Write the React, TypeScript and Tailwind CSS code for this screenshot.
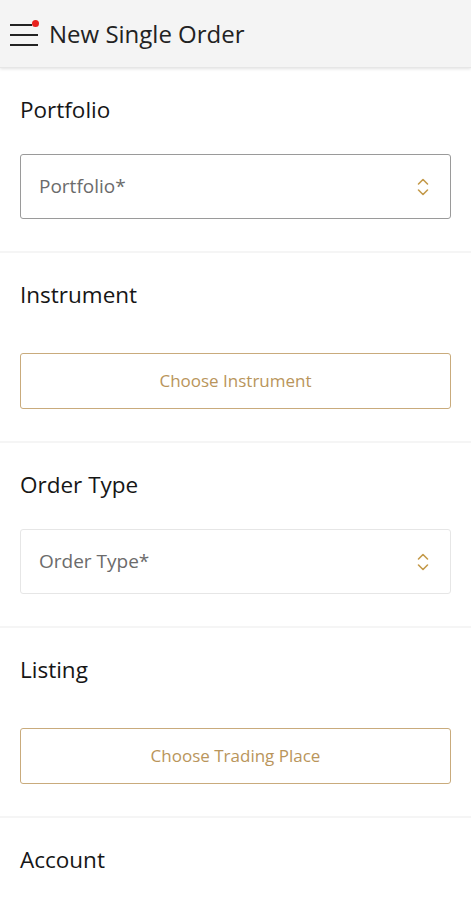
import { ReactNode } from "react";

function Chevrons() {
  return (
    <svg className="w-4 h-[22px] shrink-0" viewBox="0 0 16 22" fill="none" stroke="#c49a4a" strokeWidth={1.6} strokeLinecap="round" strokeLinejoin="round">
      <path d="M3.5 8 8 3.5 12.5 8" />
      <path d="M3.5 14 8 18.5 12.5 14" />
    </svg>
  );
}

function Select({ label, active }: { label: string; active?: boolean }) {
  return (
    <div
      className={`mt-[30px] h-[65px] flex items-center justify-between pl-[18px] pr-[19px] bg-white rounded-[3px] border ${
        active ? "border-[#9a9a9a]" : "border-[#e6e6e6]"
      }`}
    >
      <span className="text-[19px] text-[#6b6b6b]">{label}</span>
      <Chevrons />
    </div>
  );
}

function ChooseButton({ label }: { label: string }) {
  return (
    <button className="mt-[44px] w-full h-[56px] flex items-center justify-center bg-white rounded-[3px] border border-[#c9ab7c] text-[17px] text-[#b9955b]">
      {label}
    </button>
  );
}

function Section({ title, children, last }: { title: string; children?: ReactNode; last?: boolean }) {
  return (
    <section className={`px-5 pt-7 pb-8 ${last ? "" : "border-b-2 border-[#f5f5f5]"}`}>
      <h2 className="text-[22.5px] leading-[28px] text-[#161616]">{title}</h2>
      {children}
    </section>
  );
}

export default function App() {
  return (
    <div className="w-[471px] min-h-[900px] bg-white" style={{ fontFamily: '"Open Sans", "Noto Sans", sans-serif' }}>
      <header className="h-[68px] bg-[#f4f4f4] flex items-center gap-[11px] pl-[10px] shadow-[0_1px_3px_rgba(0,0,0,0.12)] border-b border-[#e6e6e6]">
        <div className="relative w-[28px] h-[22px] mt-[2px]">
          <span className="absolute left-0 top-0 w-[22px] h-[2px] bg-[#222]" />
          <span className="absolute left-0 top-[10px] w-[28px] h-[2px] bg-[#222]" />
          <span className="absolute left-0 top-[20px] w-[28px] h-[2px] bg-[#222]" />
          <span className="absolute left-[22px] top-[-4px] w-[7px] h-[7px] rounded-full bg-[#e8211d]" />
        </div>
        <h1 className="text-[24px] text-[#222] leading-none">New Single Order</h1>
      </header>

      <Section title="Portfolio">
        <Select label="Portfolio*" active />
      </Section>
      <Section title="Instrument">
        <ChooseButton label="Choose Instrument" />
      </Section>
      <Section title="Order Type">
        <Select label="Order Type*" />
      </Section>
      <Section title="Listing">
        <ChooseButton label="Choose Trading Place" />
      </Section>
      <Section title="Account" last />
    </div>
  );
}
